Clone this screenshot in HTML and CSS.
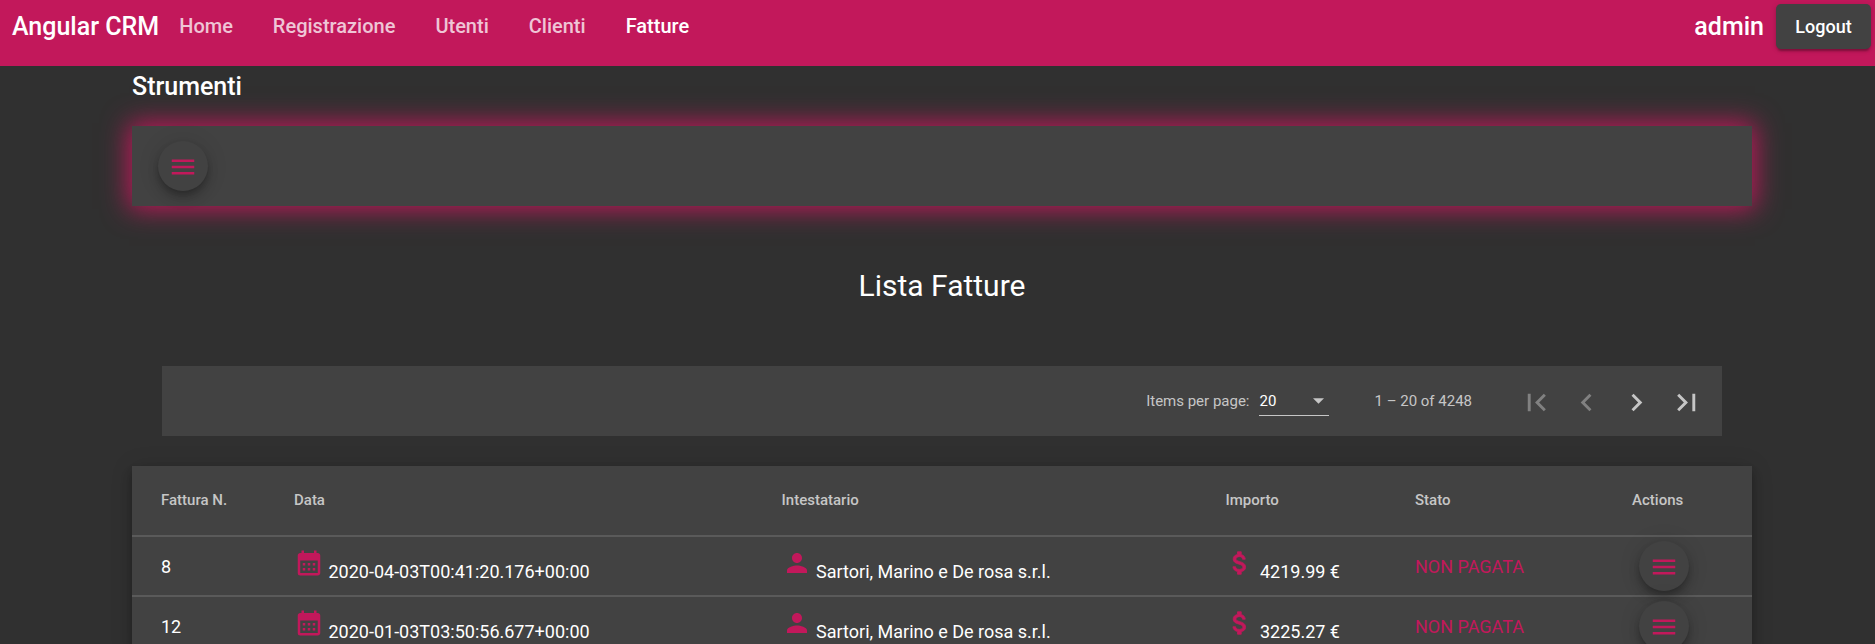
FILE: index.html
```html
<!DOCTYPE html>
<html lang="it">
<head>
<meta charset="utf-8">
<meta name="viewport" content="width=device-width, initial-scale=1">
<title>Angular CRM</title>
<link rel="stylesheet" href="styles.css">
</head>
<body>
<svg class="sprite" aria-hidden="true">
  <symbol id="menu" viewBox="0 0 24 24"><path d="M3 18h18v-2H3v2zm0-5h18v-2H3v2zm0-7v2h18V6H3z"/></symbol>
  <symbol id="calendar" viewBox="0 0 24 24"><path d="M19 4h-1V2h-2v2H8V2H6v2H5c-1.110 0-2 .9-2 2v14a2 2 0 0 0 2 2h14c1.100 0 2-.9 2-2V6c0-1.100-.9-2-2-2zm0 16H5V10h14v10zM9 14H7v-2h2v2zm4 0h-2v-2h2v2zm4 0h-2v-2h2v2zm-8 4H7v-2h2v2zm4 0h-2v-2h2v2zm4 0h-2v-2h2v2z"/></symbol>
  <symbol id="person" viewBox="0 0 24 24"><path d="M12 12c2.210 0 4-1.790 4-4s-1.790-4-4-4-4 1.790-4 4 1.790 4 4 4zm0 2c-2.670 0-8 1.340-8 4v2h16v-2c0-2.660-5.330-4-8-4z"/></symbol>
  <symbol id="dollar" viewBox="0 0 24 24"><path stroke="#c2185b" stroke-width="0.6" d="M11.800 10.900c-2.270-.590-3-1.200-3-2.150 0-1.090 1.010-1.850 2.700-1.850 1.780 0 2.440.850 2.500 2.100h2.210c-.070-1.720-1.120-3.300-3.210-3.810V3h-3v2.160c-1.940.420-3.500 1.680-3.500 3.610 0 2.310 1.910 3.460 4.700 4.130 2.500.600 3 1.480 3 2.410 0 .690-.490 1.790-2.700 1.790-2.060 0-2.870-.920-2.980-2.100h-2.200c.120 2.190 1.760 3.420 3.680 3.830V21h3v-2.150c1.950-.370 3.500-1.500 3.500-3.550 0-2.840-2.430-3.810-4.700-4.400z"/></symbol>
</svg>

<header class="topbar">
  <a class="brand" href="#">Angular CRM</a>
  <nav class="nav">
    <a class="nav-link" href="#">Home</a>
    <a class="nav-link" href="#">Registrazione</a>
    <a class="nav-link" href="#">Utenti</a>
    <a class="nav-link" href="#">Clienti</a>
    <a class="nav-link active" href="#" aria-current="page">Fatture</a>
  </nav>
  <span class="user">admin</span>
  <button class="logout" type="button">Logout</button>
</header>

<main class="page">
  <h2 class="section-title">Strumenti</h2>
  <section class="tools">
    <button class="fab" type="button" aria-label="Menu strumenti"><svg class="icon"><use href="#menu"/></svg></button>
  </section>

  <h1 class="list-title">Lista Fatture</h1>

  <div class="paginator">
    <label class="page-label" for="page-size">Items per page:</label>
    <div class="select-box">
      <select class="page-size" id="page-size"><option>20</option><option>50</option><option>100</option></select>
      <svg class="arrow" viewBox="0 0 10 5" aria-hidden="true"><path d="M0 0h10L5 5z"/></svg>
    </div>
    <span class="range">1 – 20 of 4248</span>
    <button class="page-button" type="button" aria-label="First page" disabled><svg class="page-icon" viewBox="0 0 24 24"><path d="M18.410 16.590L13.820 12l4.590-4.590L17 6l-6 6 6 6zM6 6h2v12H6z"/></svg></button>
    <button class="page-button" type="button" aria-label="Previous page" disabled><svg class="page-icon" viewBox="0 0 24 24"><path d="M15.410 7.410L14 6l-6 6 6 6 1.410-1.410L10.830 12z"/></svg></button>
    <button class="page-button" type="button" aria-label="Next page"><svg class="page-icon" viewBox="0 0 24 24"><path d="M10 6L8.590 7.410 13.170 12l-4.580 4.590L10 18l6-6z"/></svg></button>
    <button class="page-button" type="button" aria-label="Last page"><svg class="page-icon" viewBox="0 0 24 24"><path d="M5.590 7.410L10.180 12l-4.590 4.590L7 18l6-6-6-6zM16 6h2v12h-2z"/></svg></button>
  </div>

  <table class="invoices">
    <thead>
      <tr>
        <th class="col-number" scope="col">Fattura N.</th>
        <th class="col-date" scope="col">Data</th>
        <th class="col-holder" scope="col">Intestatario</th>
        <th class="col-amount" scope="col">Importo</th>
        <th class="col-state" scope="col">Stato</th>
        <th class="col-actions" scope="col">Actions</th>
      </tr>
    </thead>
    <tbody>
      <tr>
        <td class="col-number">8</td>
        <td class="with-icon"><svg class="icon"><use href="#calendar"/></svg> 2020-04-03T00:41:20.176+00:00</td>
        <td class="with-icon"><svg class="icon"><use href="#person"/></svg> Sartori, Marino e De rosa s.r.l.</td>
        <td class="with-icon"><svg class="icon"><use href="#dollar"/></svg> 4219.99 €</td>
        <td class="unpaid">NON PAGATA</td>
        <td><button class="fab" type="button" aria-label="Azioni fattura 8"><svg class="icon"><use href="#menu"/></svg></button></td>
      </tr>
      <tr>
        <td class="col-number">12</td>
        <td class="with-icon"><svg class="icon"><use href="#calendar"/></svg> 2020-01-03T03:50:56.677+00:00</td>
        <td class="with-icon"><svg class="icon"><use href="#person"/></svg> Sartori, Marino e De rosa s.r.l.</td>
        <td class="with-icon"><svg class="icon"><use href="#dollar"/></svg> 3225.27 €</td>
        <td class="unpaid">NON PAGATA</td>
        <td><button class="fab" type="button" aria-label="Azioni fattura 12"><svg class="icon"><use href="#menu"/></svg></button></td>
      </tr>
    </tbody>
  </table>
</main>
</body>
</html>
```
FILE: styles.css
```css
:root {
  --pink: #c2185b;
  --surface: #424242;
  --background: #303030;
  --muted: #c6c6c6;
}

* { box-sizing: border-box; }

body {
  margin: 0;
  height: 100vh;
  overflow: hidden;
  background: var(--background);
  color: #fff;
  font-family: Roboto, "Liberation Sans", sans-serif;
  font-size: 18px;
}

button, select {
  margin: 0;
  padding: 0;
  border: 0;
  font: inherit;
  color: inherit;
}

.sprite {
  position: absolute;
  width: 0;
  height: 0;
}

.topbar {
  display: flex;
  align-items: flex-start;
  height: 66px;
  padding: 4px 4px 0 12px;
  background: var(--pink);
  font-weight: 500;
}

.brand, .user {
  font-size: 25px;
  line-height: 45px;
  color: #fff;
  text-decoration: none;
}

.nav {
  display: flex;
  flex: 1;
  gap: 40px;
  padding-left: 20px;
}

.nav-link {
  font-size: 20px;
  line-height: 44px;
  color: rgba(255, 255, 255, 0.75);
  text-decoration: none;
}

.nav-link.active { color: #fff; }

.logout {
  width: 95px;
  height: 45px;
  margin-left: 12px;
  border-radius: 5px;
  background: var(--surface);
  box-shadow: 0 4px 2px -2px rgba(0, 0, 0, 0.2), 0 2px 3px rgba(0, 0, 0, 0.14), 0 1px 6px rgba(0, 0, 0, 0.12);
}

.page { padding: 0 123px 0 132px; }

.section-title {
  margin: 0;
  padding: 6px 0 24px;
  font-size: 25px;
  font-weight: 500;
  line-height: 30px;
}

.tools {
  padding: 15px 26px;
  background: var(--surface);
  box-shadow: 0 0 25px 3px var(--pink);
}

.fab {
  display: flex;
  align-items: center;
  justify-content: center;
  width: 50px;
  height: 50px;
  padding-top: 2px;
  border-radius: 50%;
  background: var(--surface);
  color: var(--pink);
  box-shadow: 0 4px 6px -1px rgba(0, 0, 0, 0.2), 0 8px 12px rgba(0, 0, 0, 0.14), 0 1px 22px rgba(0, 0, 0, 0.12);
}

.icon {
  width: 30px;
  height: 30px;
  fill: var(--pink);
}

.list-title {
  margin: 0;
  padding: 60px 0;
  font-size: 30px;
  font-weight: 400;
  line-height: 40px;
  text-align: center;
}

.paginator {
  display: flex;
  align-items: center;
  justify-content: flex-end;
  height: 70px;
  margin: 0 30px 30px;
  padding-right: 11px;
  background: var(--surface);
  color: var(--muted);
  font-size: 15px;
}

.select-box {
  display: grid;
  align-items: center;
  width: 70px;
  margin: 0 45px 0 10px;
  border-bottom: 1px solid var(--muted);
}

.page-size {
  grid-area: 1 / 1;
  height: 28px;
  appearance: none;
  background: transparent;
  color: #fff;
}

.page-size option { background: var(--surface); }

.arrow {
  grid-area: 1 / 1;
  justify-self: end;
  width: 11px;
  height: 6px;
  margin-right: 5px;
  fill: var(--muted);
  pointer-events: none;
}

.range { margin-right: 39px; }

.page-button {
  display: flex;
  align-items: center;
  justify-content: center;
  width: 50px;
  height: 50px;
  padding-top: 2px;
  background: transparent;
}

.page-button:disabled { color: #818181; }

.page-icon {
  width: 35px;
  height: 35px;
  fill: currentColor;
}

.invoices {
  width: 100%;
  table-layout: fixed;
  border-spacing: 0;
  background: var(--surface);
  box-shadow: 0 4px 6px -1px rgba(0, 0, 0, 0.2), 0 8px 12px rgba(0, 0, 0, 0.14), 0 1px 22px rgba(0, 0, 0, 0.12);
}

.invoices th {
  height: 71px;
  padding: 0 0 2px;
  border-bottom: 2px solid #5a5a5a;
  color: var(--muted);
  font-size: 15px;
  font-weight: 500;
  text-align: left;
}

.invoices td {
  height: 60px;
  padding: 0;
  border-bottom: 2px solid #5a5a5a;
  white-space: nowrap;
}

.invoices .with-icon { padding-bottom: 2px; }

.invoices td .fab { margin-left: 7px; }

.invoices .unpaid { color: var(--pink); }

.invoices .col-number { width: 10%; padding-left: 29px; }
.col-date { width: 30.1%; }
.col-holder { width: 27.4%; }
.col-amount { width: 11.7%; }
.col-state { width: 13.4%; }
.col-actions { width: 7.4%; }
```
